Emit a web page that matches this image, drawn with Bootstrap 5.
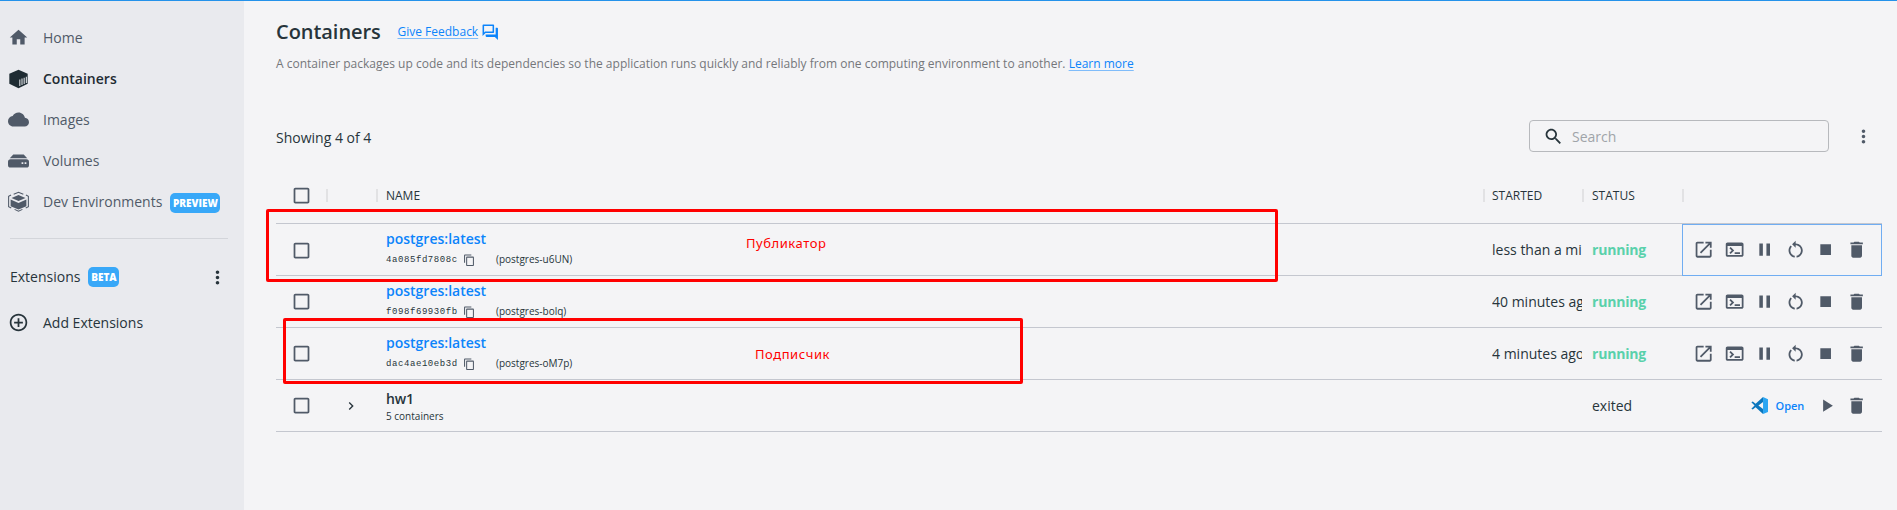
<!DOCTYPE html>
<html lang="en">
<head>
<meta charset="utf-8">
<title>Containers</title>
<link rel="stylesheet" href="https://cdn.jsdelivr.net/npm/bootstrap@5.3.0/dist/css/bootstrap.min.css">
<style>
body{font-family:"Open Sans",sans-serif;font-size:14px;line-height:20px;background:#f4f4f6;color:#27343b;border-top:1px solid #2492ea;height:510px;overflow:hidden}
svg{display:block;flex:none;fill:currentColor}
.side{width:244px;background:#e9eaee;color:#505a68;padding-top:16px}
.side .nav-link{height:41px;padding:1px 0 0 8px;color:inherit;gap:14px;white-space:nowrap}
.side .nav-link.active{color:#1f2c33;font-weight:600}
.side .nav-link svg{width:21px;height:21px;margin-top:-1px}
.tag{background:#38a8f8;color:#fff;font-size:10px;font-weight:800;height:20px;line-height:21px;border-radius:5px;text-align:center}
.nav-link .tag{width:50px;margin:2px 0 0 -6px}
.rule{height:1px;background:#d3d5da;margin:16px 16px 0 10px}
.ext{height:20px;margin-top:28px;padding:0 16px 0 10px;color:#27343b}
.main{width:1653px;padding:19px 15px 0 32px}
h1{font-size:20px;line-height:24px;font-weight:600;width:121.500px;letter-spacing:-.05px}
.blue{color:#0c84fb}
.ul{text-decoration:underline;text-decoration-color:#7fbcfa;text-underline-offset:2px;text-decoration-thickness:1px}
.desc{font-size:12px;line-height:16px;color:#74777b;margin-top:12px;height:16px;white-space:nowrap;letter-spacing:.008px}
.tools{margin-top:48px;height:32px}
.search{width:300px;height:32px;border:1px solid #b7b9bd;border-radius:4px;color:#a0a4a9;padding-left:13px}
.gridrow{display:grid;grid-template-columns:52px 50px 1106px 100px 100px 198px;width:1606px;height:52px;border-bottom:1px solid #c4c7cf;align-items:center}
.gridrow.head{height:57px;font-size:12px;margin-top:15px;font-weight:500}
.head>div{border-right:2px solid #e2e2e4;height:13px;line-height:13px;padding-left:8px}
.head>div:last-child{border:0}
.box{width:21px;height:21px;margin-left:14.500px;color:#505a68}
.head .first{padding-left:0;display:flex;align-items:center}
.nm{padding:5px 0 0 8px;align-self:start}
.nm strong{display:block;font-weight:600;line-height:20px}
.nm.group{padding-top:9px}
.nm.group strong{letter-spacing:-.2px}
.sub{font-size:10px;line-height:14px;height:14px;margin-top:3px}
.hash{font-family:"Liberation Mono",monospace;font-size:9px;letter-spacing:.58px;width:77px;flex:none;margin-top:1px}
.nm.group .sub{margin-top:0}
.copy{width:12.500px;height:12.500px;margin:2px 20.500px 0 0;color:#505a68}
.cut{padding-left:8px;width:100px;overflow:hidden;white-space:nowrap}
.cut>span{display:block;overflow:hidden;width:90px}
.run{color:#59d1ab;font-weight:700;padding-left:8px;letter-spacing:-.2px}
.act{height:100%;padding-left:9px;gap:9.300px;color:#505a68}
.act svg{width:21.3px;height:21.3px}
.picked{height:52px;margin-left:-2px;padding-left:11px;align-self:start;outline:1px solid #70adf2;outline-offset:-1px}
/* annotations drawn over the table */
.note{position:absolute;border:3px solid #f00;border-radius:2px;color:#f00;font-family:"Noto Sans",sans-serif;font-size:13px;line-height:18px;letter-spacing:.55px}
.note span{position:absolute}
.n1{left:266px;top:209px;width:1012px;height:73px}
.n1 span{left:477px;top:22px}
.n2{left:283px;top:318px;width:740px;height:66px}
.n2 span{left:469px;top:24px}
</style>
<script src="https://cdn.jsdelivr.net/npm/bootstrap@5.3.0/dist/js/bootstrap.bundle.min.js"></script>
</head>
<body>
<svg class="d-none">
<symbol id="home" viewBox="0 0 24 24"><path d="M10 20v-6h4v6h5v-8h3L12 3 2 12h3v8z"/></symbol>
<symbol id="cube" viewBox="0 0 24 24"><path d="M12 2 22.500 6.500V18L12 23 1.500 18V6.500z"/><path d="M13.500 13v7.500M16 12v7.400M18.500 11v7.200M21 10v7" stroke="#d5d8dc" stroke-width="1.300"/></symbol>
<symbol id="cloud" viewBox="0 0 24 24"><path d="M19.350 10.040C18.670 6.590 15.640 4 12 4 9.110 4 6.600 5.640 5.350 8.040 2.340 8.360 0 10.910 0 14c0 3.310 2.690 6 6 6h13c2.760 0 5-2.240 5-5 0-2.640-2.050-4.780-4.650-4.960z"/></symbol>
<symbol id="disk" viewBox="0 0 24 24"><path d="M6 5h12l4 4.500H2z"/><path fill-rule="evenodd" d="M3 10.500h18a3 3 0 0 1 3 3V17a3 3 0 0 1-3 3H3a3 3 0 0 1-3-3v-3.500a3 3 0 0 1 3-3zM15.500 14v2h2v-2zM19 14v2h2v-2z"/></symbol>
<symbol id="dev" viewBox="0 0 24 24"><path d="M12 4.500 20 8 12 11.500 4 8zM3 9.800 12 13.800l9-4V17.300L12 21l-9-3.700z"/><path d="M3.500 4.500.7 6v12l3 1.500M20.500 4.500 23.300 6v12l-3 1.500M6.500 3.800 12 1.500l5.500 2.300M7.500 21 12 23l4.500-2" fill="none" stroke="currentColor" stroke-width="1.200"/></symbol>
<symbol id="plus" viewBox="0 0 24 24"><path d="M13 7h-2v4H7v2h4v4h2v-4h4v-2h-4V7zm-1-5C6.480 2 2 6.480 2 12s4.480 10 10 10 10-4.480 10-10S17.520 2 12 2zm0 18c-4.410 0-8-3.590-8-8s3.590-8 8-8 8 3.590 8 8-3.590 8-8 8z"/></symbol>
<symbol id="dots" viewBox="0 0 24 24"><path d="M12 8c1.100 0 2-.9 2-2s-.9-2-2-2-2 .9-2 2 .9 2 2 2zm0 2c-1.100 0-2 .9-2 2s.9 2 2 2 2-.9 2-2-.9-2-2-2zm0 6c-1.100 0-2 .9-2 2s.9 2 2 2 2-.9 2-2-.9-2-2-2z"/></symbol>
<symbol id="chat" viewBox="0 0 24 24"><path d="M15 4v7H5.170L4 12.170V4h11m1-2H3c-.55 0-1 .45-1 1v14l4-4h10c.55 0 1-.45 1-1V3c0-.55-.45-1-1-1zm5 4h-2v9H6v2c0 .55.450 1 1 1h11l4 4V7c0-.55-.45-1-1-1z"/></symbol>
<symbol id="find" viewBox="0 0 24 24"><path d="M15.500 14h-.79l-.28-.27C15.410 12.590 16 11.110 16 9.500 16 5.910 13.090 3 9.500 3S3 5.910 3 9.500 5.910 16 9.500 16c1.610 0 3.090-.59 4.230-1.570l.27.28v.79l5 4.990L20.490 19l-4.990-5zm-6 0C7.010 14 5 11.990 5 9.500S7.010 5 9.500 5 14 7.010 14 9.500 11.990 14 9.500 14z"/></symbol>
<symbol id="check" viewBox="0 0 24 24"><path d="M19 5v14H5V5h14m0-2H5c-1.100 0-2 .9-2 2v14c0 1.100.9 2 2 2h14c1.100 0 2-.9 2-2V5c0-1.100-.9-2-2-2z"/></symbol>
<symbol id="copy" viewBox="0 0 24 24"><path d="M16 1H4c-1.100 0-2 .9-2 2v14h2V3h12V1zm3 4H8c-1.100 0-2 .9-2 2v14c0 1.100.9 2 2 2h11c1.100 0 2-.9 2-2V7c0-1.100-.9-2-2-2zm0 16H8V7h11v14z"/></symbol>
<symbol id="launch" viewBox="0 0 24 24"><path d="M19 19H5V5h7V3H5c-1.110 0-2 .9-2 2v14c0 1.100.89 2 2 2h14c1.100 0 2-.9 2-2v-7h-2v7zM14 3v2h3.590l-9.830 9.830 1.410 1.410L19 6.410V10h2V3h-7z"/></symbol>
<symbol id="term" viewBox="0 0 24 24"><path d="M20 4H4c-1.110 0-2 .9-2 2v12c0 1.100.89 2 2 2h16c1.100 0 2-.9 2-2V6c0-1.100-.89-2-2-2zm0 14H4V8h16v10zm-2-1h-6v-2h6v2zM7.500 17l-1.410-1.410L8.670 13l-2.590-2.590L7.500 9l4 4-4 4z"/></symbol>
<symbol id="pause" viewBox="0 0 24 24"><path d="M6 19h4V5H6v14zm8-14v14h4V5h-4z"/></symbol>
<symbol id="restart" viewBox="0 0 24 24"><path d="M12 5V2L8 6l4 4V7c3.310 0 6 2.690 6 6 0 2.970-2.170 5.430-5 5.910v2.020c3.950-.49 7-3.850 7-7.930 0-4.420-3.580-8-8-8zm-6 8c0-1.650.67-3.150 1.760-4.240L6.340 7.340C4.900 8.790 4 10.790 4 13c0 4.080 3.050 7.440 7 7.930v-2.020c-2.830-.48-5-2.940-5-5.910z"/></symbol>
<symbol id="stop" viewBox="0 0 24 24"><path d="M6 6h12v12H6z"/></symbol>
<symbol id="play" viewBox="0 0 24 24"><path d="M8 5v14l11-7z"/></symbol>
<symbol id="trash" viewBox="0 0 24 24"><path d="M6 19c0 1.100.9 2 2 2h8c1.100 0 2-.9 2-2V7H6v12zM19 4h-3.500l-1-1h-5l-1 1H5v2h14V4z"/></symbol>
<symbol id="chev" viewBox="0 0 24 24"><path d="M10 6 8.590 7.410 13.170 12l-4.580 4.590L10 18l6-6z"/></symbol>
</svg>

<div class="d-flex h-100">
<aside class="side">
<nav class="nav flex-column">
<a class="nav-link d-flex align-items-center"><svg><use href="#home"/></svg>Home</a>
<a class="nav-link active d-flex align-items-center"><svg><use href="#cube"/></svg>Containers</a>
<a class="nav-link d-flex align-items-center"><svg><use href="#cloud"/></svg>Images</a>
<a class="nav-link d-flex align-items-center"><svg><use href="#disk"/></svg>Volumes</a>
<a class="nav-link d-flex align-items-center"><svg><use href="#dev"/></svg>Dev Environments<span class="tag">PREVIEW</span></a>
</nav>
<div class="rule"></div>
<div class="ext d-flex align-items-center">Extensions<span class="tag ms-2" style="width:31px">BETA</span><svg class="ms-auto" width="21" height="21"><use href="#dots"/></svg></div>
<a class="nav-link d-flex align-items-center" style="margin-top:15px;color:#27343b"><svg><use href="#plus"/></svg>Add Extensions</a>
</aside>

<main class="main">
<div class="d-flex align-items-center">
<h1 class="mb-0">Containers</h1>
<a class="blue ul" style="font-size:12px">Give Feedback</a>
<svg class="blue" width="18.500" height="18.500" style="margin-left:3px"><use href="#chat"/></svg>
</div>
<p class="desc mb-0">A container packages up code and its dependencies so the application runs quickly and reliably from one computing environment to another. <a class="blue ul">Learn more</a></p>
<div class="tools d-flex align-items-center">
<span class="mt-1">Showing 4 of 4</span>
<div class="search d-flex align-items-center ms-auto"><svg width="21" height="21" style="color:#27343b"><use href="#find"/></svg><span style="margin:1px 0 0 8px">Search</span></div>
<svg width="21" height="21" style="margin:0 8px 0 24px;color:#505a68"><use href="#dots"/></svg>
</div>

<section>
<div class="gridrow head"><div class="first"><svg class="box"><use href="#check"/></svg></div><div></div><div style="border:0">NAME</div><div style="border-left:2px solid #e2e2e4;padding-left:7px;margin-left:-1px">STARTED</div><div>STATUS</div><div></div></div>
<div class="gridrow"><svg class="box"><use href="#check"/></svg><span></span>
<div class="nm"><strong class="blue">postgres:latest</strong><div class="sub d-flex"><span class="hash">4a085fd7808c</span><svg class="copy"><use href="#copy"/></svg><span class="ref">(postgres-u6UN)</span></div></div>
<div class="cut"><span>less than a mi</span></div><div class="run">running</div>
<div class="act picked d-flex align-items-center"><svg><use href="#launch"/></svg><svg><use href="#term"/></svg><svg><use href="#pause"/></svg><svg><use href="#restart"/></svg><svg><use href="#stop"/></svg><svg><use href="#trash"/></svg></div></div>
<div class="gridrow"><svg class="box"><use href="#check"/></svg><span></span>
<div class="nm"><strong class="blue">postgres:latest</strong><div class="sub d-flex"><span class="hash">f098f69930fb</span><svg class="copy"><use href="#copy"/></svg><span class="ref">(postgres-bolq)</span></div></div>
<div class="cut"><span>40 minutes ag</span></div><div class="run">running</div>
<div class="act d-flex align-items-center"><svg><use href="#launch"/></svg><svg><use href="#term"/></svg><svg><use href="#pause"/></svg><svg><use href="#restart"/></svg><svg><use href="#stop"/></svg><svg><use href="#trash"/></svg></div></div>
<div class="gridrow"><svg class="box"><use href="#check"/></svg><span></span>
<div class="nm"><strong class="blue">postgres:latest</strong><div class="sub d-flex"><span class="hash">dac4ae10eb3d</span><svg class="copy"><use href="#copy"/></svg><span class="ref">(postgres-oM7p)</span></div></div>
<div class="cut"><span>4 minutes ago</span></div><div class="run">running</div>
<div class="act d-flex align-items-center"><svg><use href="#launch"/></svg><svg><use href="#term"/></svg><svg><use href="#pause"/></svg><svg><use href="#restart"/></svg><svg><use href="#stop"/></svg><svg><use href="#trash"/></svg></div></div>
<div class="gridrow"><svg class="box"><use href="#check"/></svg><svg width="16" height="16" style="margin-left:15px"><use href="#chev"/></svg>
<div class="nm group"><strong>hw1</strong><div class="sub">5 containers</div></div>
<div></div><div style="padding-left:8px">exited</div>
<div class="act d-flex align-items-center justify-content-end" style="padding-right:14.500px">
<svg viewBox="0 0 24 24" style="width:17px;height:17px;margin-right:-1.500px"><path d="M17 0 6.500 9.600 2.500 6.500.5 7.500 5 12 .5 16.500l2 1 4-3.100L17 24V17L10.500 12 17 7z" fill="#0b76bd"/><path d="M17 0 24 3v18l-7 3z" fill="#2aa5f2"/></svg>
<span class="blue" style="font-size:11px;font-weight:600;margin:1px 2px 0 0">Open</span><svg><use href="#play"/></svg><svg><use href="#trash"/></svg></div></div>
</section>
</main>
</div>
<div class="note n1"><span>Публикатор</span></div>
<div class="note n2"><span>Подписчик</span></div>
</body>
</html>
